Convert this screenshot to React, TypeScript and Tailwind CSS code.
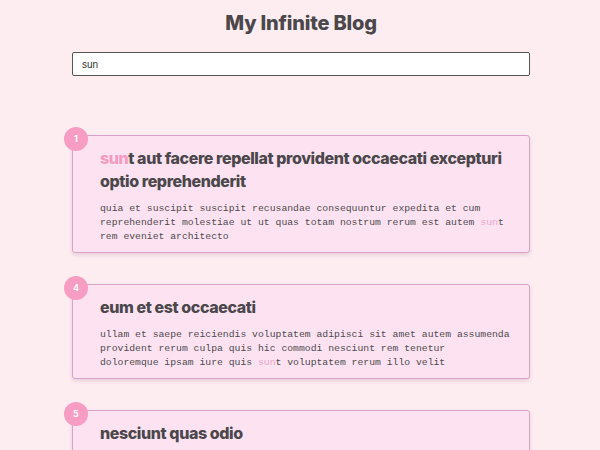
import React, { useState } from 'react';

type Post = { id: number; title: string; body: string };

// body lines break where the reference wraps them
const posts: Post[] = [
    {
        id: 1,
        title: 'sunt aut facere repellat provident occaecati excepturi optio reprehenderit',
        body: 'quia et suscipit suscipit recusandae consequuntur expedita et cum\nreprehenderit molestiae ut ut quas totam nostrum rerum est autem sunt\nrem eveniet architecto',
    },
    {
        id: 4,
        title: 'eum et est occaecati',
        body: 'ullam et saepe reiciendis voluptatem adipisci sit amet autem assumenda\nprovident rerum culpa quis hic commodi nesciunt rem tenetur\ndoloremque ipsam iure quis sunt voluptatem rerum illo velit',
    },
    {
        id: 5,
        title: 'nesciunt quas odio',
        body: 'repudiandae veniam quaerat sunt sed alias aut fugiat sit autem sed est\nvoluptatem omnis possimus esse voluptatibus quis\nest aut tenetur dolor neque',
    },
];

const Highlight: React.FC<{ text: string; term: string; className: string }> = ({ text, term, className }) => {
    if (!term) return <>{text}</>;
    const parts = text.split(term);
    return (
        <>
            {parts.map((part, i) => (
                <React.Fragment key={i}>
                    {part}
                    {i < parts.length - 1 && <span className={className}>{term}</span>}
                </React.Fragment>
            ))}
        </>
    );
};

export default function App() {
    const [search, setSearch] = useState('sun');

    return (
        <div className="min-h-[450px] bg-[#fdedf1] pb-10 pl-[72px] pr-[70px] font-['Inter',sans-serif] text-[#4b474b]">
            <h1 className="pt-[9px] text-center text-[20px] font-extrabold leading-[28px] tracking-[-0.2px]">My Infinite Blog</h1>
            <input
                type="text"
                value={search}
                onChange={(e) => setSearch(e.target.value)}
                className="mt-[15px] block h-[24px] w-full rounded-[2px] border border-[#555] bg-white px-[9px] text-[10px] text-[#333] outline-none font-['Liberation_Sans',sans-serif]"
            />
            <div className="mt-[59px] flex flex-col gap-[31px]">
                {posts.map((post) => (
                    <div
                        key={post.id}
                        className="relative rounded-[3px] border border-[#d9a3c8] bg-[#fde3f1] pb-[8px] pl-[27px] pr-[14px] pt-[11px] shadow-[0_2px_4px_rgba(150,80,120,0.2)]"
                    >
                        <div className="absolute left-[-9px] top-[-9px] flex h-[24px] w-[24px] items-center justify-center rounded-full bg-[#f79cc2] text-[9px] font-bold text-white">
                            {post.id}
                        </div>
                        <h2 className="text-[16px] font-extrabold leading-[23px] tracking-[-0.4px]">
                            <Highlight text={post.title} term={search} className="text-[#f59bc2]" />
                        </h2>
                        <p className="mt-[9px] whitespace-pre-line font-['Liberation_Mono',monospace] text-[9.75px] leading-[14px] text-[#4f4a4f]">
                            <Highlight text={post.body} term={search} className="text-[#e8a5cb]" />
                        </p>
                    </div>
                ))}
            </div>
        </div>
    );
}
